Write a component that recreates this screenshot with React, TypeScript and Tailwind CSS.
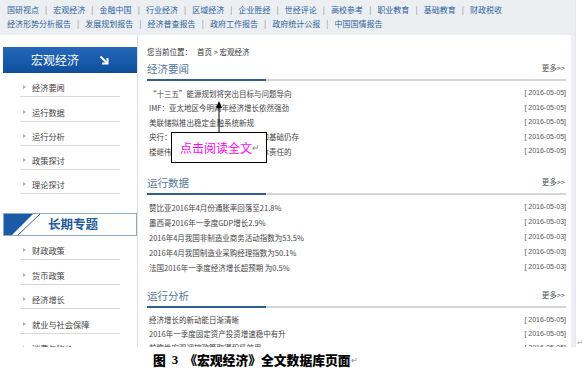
import React from "react";

const nav1 = ["国研视点","宏观经济","金融中国","行业经济","区域经济","企业胜经","世经评论","高校参考","职业教育","基础教育","财政税收"];
const nav2 = ["经济形势分析报告","发展规划报告","经济普查报告","政府工作报告","政府统计公报","中国国情报告"];

const side1 = ["经济要闻","运行数据","运行分析","政策探讨","理论探讨"];
const side2 = ["财政政策","货币政策","经济增长","就业与社会保障","消费与物价"];

const sec1 = [
  "“十三五”能源规划将突出目标与问题导向",
  "IMF：亚太地区今明两年经济增长依然强劲",
  "美联储拟推出稳定金融系统新规",
  "央行：中国经济长期向好的基本面和基础仍存",
  "楼继伟：财政部门要切实履行好主体责任的",
];
const sec2 = [
  "赞比亚2016年4月份通胀率回落至21.8%",
  "墨西哥2016年一季度GDP增长2.9%",
  "2016年4月我国非制造业商务活动指数为53.5%",
  "2016年4月我国制造业采购经理指数为50.1%",
  "法国2016年一季度经济增长超预期 为0.5%",
];
const sec3 = [
  "经济增长的新动能日渐清晰",
  "2016年一季度固定资产投资增速稳中有升",
  "前瞻性宏观调控政策取得积极效果",
];

function NavRow({ items }: { items: string[] }) {
  return (
    <div className="flex h-[14px] items-center whitespace-nowrap">
      {items.map((t, i) => (
        <React.Fragment key={t}>
          {i > 0 && <span className="inline-block w-[14.3px] text-center text-[#8a8a8a]">|</span>}
          <span>{t}</span>
        </React.Fragment>
      ))}
    </div>
  );
}

function SideList({ items, h }: { items: string[]; h: string }) {
  return (
    <div className="ml-[17px] w-[100px]">
      {items.map((t) => (
        <div key={t} className={`${h} flex items-end pb-[3px] border-b border-[#d9d9d9]`}>
          <div className="flex h-[12px] items-center">
            <span className="ml-[3px] h-0 w-0 border-y-[2.5px] border-l-[3px] border-y-transparent border-l-[#b0b0b0]" />
            <span className="ml-[6px] text-[8.2px] leading-[12px] text-[#444]">{t}</span>
          </div>
        </div>
      ))}
    </div>
  );
}

function Section({ title, rows, date, mt, rowH }: { title: string; rows: string[]; date: string; mt: string; rowH: string }) {
  return (
    <div className={mt}>
      <div className="flex h-[14px] items-center justify-between">
        <span className="text-[10.5px] leading-[14px] text-[#5277a0]">{title}</span>
        <span className="mb-[3px] mr-[1px] text-[7.5px] leading-[10px] text-[#555]">更多&gt;&gt;</span>
      </div>
      <div className="mt-[3px] flex w-[419px]">
        <div className="h-[2px] w-[119px] bg-[#2f5f8f]" />
        <div className="h-[2px] flex-1 bg-[#d5d5d5]" />
      </div>
      <div className="mt-[5px]">
        {rows.map((r) => (
          <div key={r} className={`${rowH} flex items-center justify-between whitespace-nowrap`}>
            <span className="ml-[2px] text-[7.5px] text-[#444]">{r}</span>
            <span className="font-['Liberation_Sans',sans-serif] text-[7px] text-[#555]">[ {date}]</span>
          </div>
        ))}
      </div>
    </div>
  );
}

export default function App() {
  return (
    <div className="relative h-[378px] w-[583px] overflow-hidden bg-white font-[Noto_Sans_CJK_SC,sans-serif]">
      <div className="flex">
        <div className="h-[347px] w-[578px] overflow-hidden border-r border-[#e4e8ee]">
          {/* top nav */}
          <div className="h-[35px] bg-[#eceff1] pl-[7px] pt-[3px] text-[8px] text-[#2d5f9e]">
            <NavRow items={nav1} />
            <NavRow items={nav2} />
          </div>
          {/* body */}
          <div className="flex">
            {/* sidebar */}
            <div className="ml-[3px] h-[320px] w-[136px] border-r border-[#e2e2e2] pt-[12px]">
              <div className="flex h-[26px] items-center justify-center bg-gradient-to-b from-[#2468ba] to-[#0f4e9d] text-white">
                <span className="text-[12px] leading-[14px]">宏观经济</span>
                <svg className="ml-[20px]" width="10" height="10" viewBox="0 0 10 10">
                  <path d="M1.5 1.5 L8 8" stroke="white" strokeWidth="2" fill="none" />
                  <path d="M8.5 3 V8.5 H3" stroke="white" strokeWidth="2" fill="none" />
                </svg>
              </div>
              <SideList items={side1} h="h-[24.3px]" />
              <div className="relative mt-[18.5px] flex h-[23px] items-center justify-center border border-[#8ea8c8] bg-white">
                <svg className="absolute left-0 top-0" width="40" height="21" viewBox="0 0 40 21">
                  <polygon points="0,0 29,0 8,21 0,21" fill="#1b5aa6" />
                  <line x1="36" y1="0" x2="14" y2="21" stroke="#3d6fb0" strokeWidth="1" />
                </svg>
                <span className="ml-[6px] text-[12.5px] font-bold leading-[16px] text-[#1f5b9e]">长期专题</span>
              </div>
              <SideList items={side2} h="h-[24.5px]" />
            </div>
            {/* main */}
            <div className="ml-[9px] w-[420px]">
              <div className="mt-[12px] text-[7.5px] leading-[10px] text-[#333]">
                您当前位置：<span className="ml-[5px]">首页 &gt; 宏观经济</span>
              </div>
              <Section title="经济要闻" rows={sec1} date="2016-05-05" mt="mt-[5px]" rowH="h-[14.5px]" />
              <Section title="运行数据" rows={sec2} date="2016-05-03" mt="mt-[17.5px]" rowH="h-[15px]" />
              <Section title="运行分析" rows={sec3} date="2016-05-05" mt="mt-[14px]" rowH="h-[14px]" />
            </div>
            <div className="ml-[5px] h-[320px] w-[4px] bg-[#ebf0f7]" />
          </div>
        </div>
        <span className="ml-[1px] self-end pb-[1px] text-[7px] leading-[8px] text-[#999]">↵</span>
      </div>
      {/* caption */}
      <div className="mt-[5px] flex items-center pl-[153px] text-[12.8px] font-black leading-[16px] text-black">
        <span>图</span>
        <span className="ml-[6px] font-['Liberation_Serif',serif] font-bold">3</span>
        <span className="ml-[6px]">《宏观经济》全文数据库页面</span>
        <span className="text-[8px] font-normal text-[#888]">↵</span>
      </div>
      {/* annotation arrow */}
      <svg className="absolute left-[214px] top-[100px]" width="10" height="33" viewBox="0 0 10 33">
        <polygon points="5,1 2,8 8,8" fill="black" />
        <line x1="5" y1="7" x2="5" y2="33" stroke="black" strokeWidth="1" />
      </svg>
      {/* annotation callout */}
      <div className="absolute left-[171px] top-[132px] flex h-[31px] w-[96px] items-center border border-black bg-white pl-[8px]">
        <span className="text-[12px] leading-[14px] text-[#ff00ff]">点击阅读全文</span>
        <span className="text-[9px] leading-[12px] text-[#888]">↵</span>
      </div>
    </div>
  );
}
